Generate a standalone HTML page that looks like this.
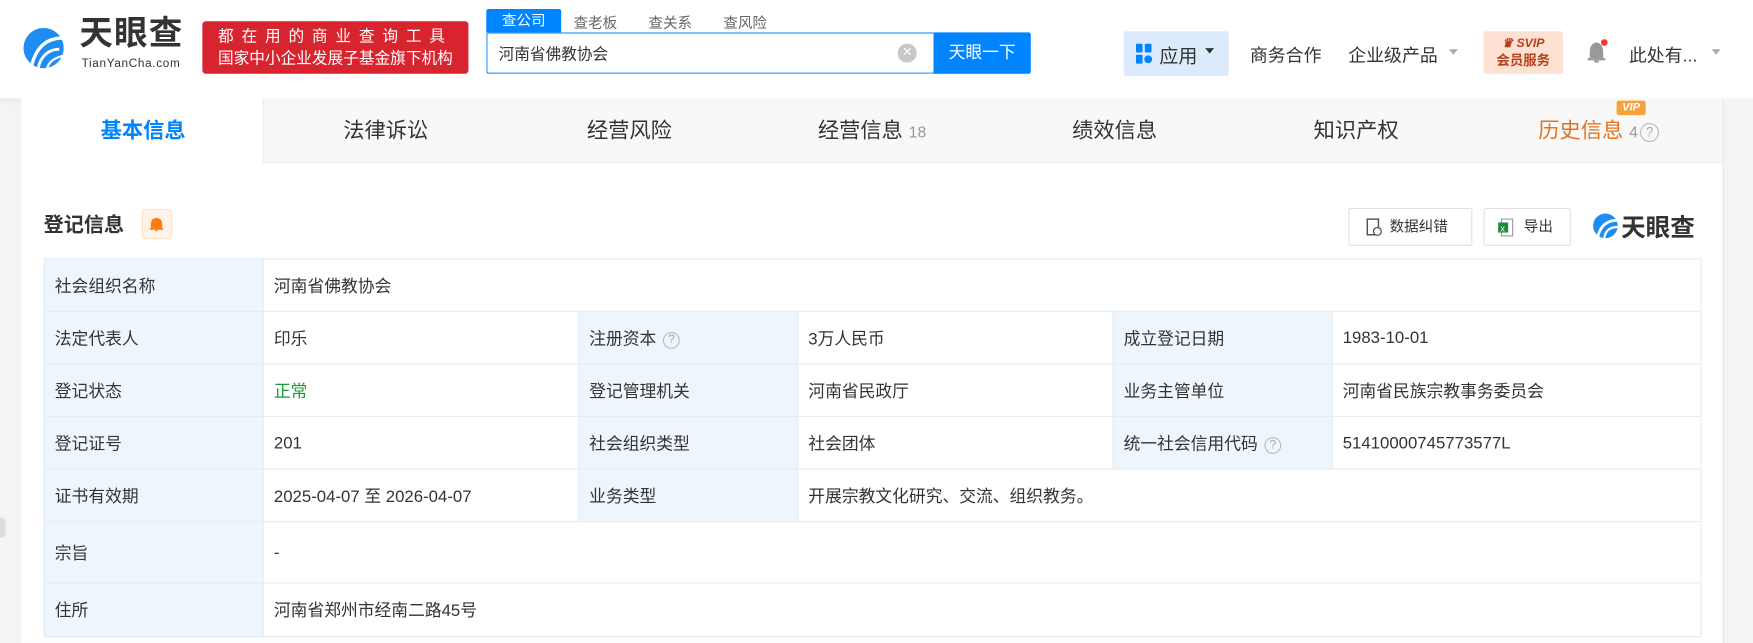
<!DOCTYPE html>
<html><head><meta charset="utf-8"><style>
*{margin:0;padding:0;box-sizing:border-box}
html,body{width:1753px;height:643px;overflow:hidden;background:#f5f5f5}
body{font-family:"Liberation Sans","Noto Sans CJK SC",sans-serif;color:#333}
#w{position:absolute;left:0;top:0;width:1568px;height:575px;transform:scale(1.11798);transform-origin:0 0;background:#f4f4f4}
.a{position:absolute;white-space:nowrap}
table{border-collapse:collapse;position:absolute;left:39px;top:231px;width:1483px}
td{border:1px solid #e4ecf4;font-size:15px;color:#333;padding:0 9px;height:47px}
td.l{background:#eef6fd;width:196px}
td.v{width:282px}
.q{display:inline-block;width:15px;height:15px;border:1px solid #bbb;border-radius:50%;font-size:11px;line-height:13px;text-align:center;color:#aaa;margin-left:6px;vertical-align:1px}
.tab{position:absolute;top:102px;font-size:19px;color:#333;transform:translateX(-50%)}
</style></head><body><div id="w">
<div class="a" style="left:0;top:0;width:1568px;height:88px;background:#fff;box-shadow:0 2px 6px rgba(0,0,0,.08)"></div>
<svg class="a" style="left:20px;top:20px" width="38" height="46" viewBox="0 0 38 46"><circle cx="19" cy="23" r="18" fill="#1e8cf0"/><path d="M8 40 C12 22 22 14 36 14" stroke="#fff" stroke-width="3" fill="none"/><path d="M14 42 C16 30 24 24 33 24" stroke="#fff" stroke-width="2.5" fill="none"/><path d="M22 42 C23 36 28 32 36 30" stroke="#fff" stroke-width="2" fill="none"/></svg>
<div class="a" style="left:71px;top:12px;font-size:30px;font-weight:bold;color:#333;letter-spacing:1px;line-height:38px">天眼查</div>
<div class="a" style="left:73px;top:51px;font-size:10.5px;color:#333;letter-spacing:.6px;line-height:12px">TianYanCha.com</div>
<div class="a" style="left:181px;top:19px;width:238px;height:47px;background:#d8242e;border-radius:3px;color:#fff;font-size:14px;text-align:center;line-height:20px;padding-top:3px"><div style="letter-spacing:7px">都在用的商业查询工具</div><div>国家中小企业发展子基金旗下机构</div></div>
<div class="a" style="left:435px;top:8px;width:67px;height:21px;background:#0084ff;color:#fff;font-size:13px;text-align:center;line-height:21px;border-radius:2px 2px 0 0">查公司</div>
<div class="a" style="left:513px;top:10px;font-size:13px;color:#666">查老板</div>
<div class="a" style="left:580px;top:10px;font-size:13px;color:#666">查关系</div>
<div class="a" style="left:647px;top:10px;font-size:13px;color:#666">查风险</div>
<div class="a" style="left:435px;top:29px;width:401px;height:37px;border:1px solid #0084ff;border-right:0;background:#fff;border-radius:2px 0 0 2px"></div>
<div class="a" style="left:446px;top:38px;font-size:14px;color:#333">河南省佛教协会</div>
<div class="a" style="left:803px;top:39px;width:17px;height:17px;border-radius:50%;background:#c8c8c8;color:#fff;font-size:11px;line-height:17px;text-align:center">✕</div>
<div class="a" style="left:835px;top:29px;width:87px;height:37px;background:#0084ff;color:#fff;font-size:15px;text-align:center;line-height:37px;border-radius:0 2px 2px 0">天眼一下</div>
<div class="a" style="left:1005px;top:28px;width:94px;height:40px;background:#dcebfc;border-radius:2px"></div>
<svg class="a" style="left:1016px;top:39px" width="16" height="18"><rect x="0" y="0" width="6" height="8" rx="1" fill="#0084ff"/><rect x="8" y="0" width="6" height="8" rx="1" fill="#0084ff"/><rect x="0" y="10" width="6" height="8" rx="1" fill="#0084ff"/><circle cx="11" cy="14" r="3.5" fill="#0084ff"/></svg>
<div class="a" style="left:1037px;top:36px;font-size:17px;color:#333">应用</div>
<div class="a" style="left:1078px;top:43px;width:0;height:0;border:4px solid transparent;border-top:5px solid #333"></div>
<div class="a" style="left:1118px;top:36px;font-size:16px;color:#333">商务合作</div>
<div class="a" style="left:1206px;top:36px;font-size:16px;color:#333">企业级产品</div>
<div class="a" style="left:1296px;top:44px;border:4px solid transparent;border-top:5px solid #aaa"></div>
<div class="a" style="left:1327px;top:28px;width:71px;height:38px;background:#fde2d4;border-radius:2px;text-align:center;color:#b8401c;font-weight:bold;font-size:11px;line-height:15px;padding-top:4px"><div style="font-style:italic">♛ SVIP</div><div style="font-size:12px">会员服务</div></div>
<svg class="a" style="left:1419px;top:35px" width="20" height="22"><path d="M3 17 L3 11 C3 6 6 3 9 3 C12 3 15 6 15 11 L15 17 Z" fill="#999"/><rect x="1" y="17" width="16" height="2" fill="#999"/><rect x="7" y="19" width="4" height="2" fill="#999"/><circle cx="16" cy="3" r="3" fill="#f33"/></svg>
<div class="a" style="left:1457px;top:36px;font-size:16px;color:#333">此处有...</div>
<div class="a" style="left:1531px;top:44px;border:4px solid transparent;border-top:5px solid #aaa"></div>
<div class="a" style="left:19px;top:88px;width:1522px;height:487px;background:#fff"></div>
<div class="a" style="left:19px;top:88px;width:1522px;height:58px;background:#f8f8f8;border-bottom:1px solid #ececec"></div>
<div class="a" style="left:19px;top:88px;width:217px;height:58px;background:#fff;border-right:1px solid #ececec"></div>
<div class="tab" style="left:128px;color:#0084ff;font-weight:bold">基本信息</div>
<div class="tab" style="left:345px">法律诉讼</div>
<div class="tab" style="left:563px">经营风险</div>
<div class="tab" style="left:780px">经营信息 <span style="font-size:14px;color:#999">18</span></div>
<div class="tab" style="left:997px">绩效信息</div>
<div class="tab" style="left:1213px">知识产权</div>
<div class="tab" style="left:1430px;color:#e5731e">历史信息 <span style="font-size:14px;color:#999">4</span><span class="q" style="width:17px;height:17px;line-height:15px;font-size:12px;margin-left:2px">?</span></div>
<div class="a" style="left:1446px;top:90px;width:26px;height:13px;background:#f7a23b;color:#fff;font-size:10px;font-weight:bold;font-style:italic;text-align:center;line-height:13px;border-radius:2px">VIP</div>
<div class="a" style="left:1541px;top:88px;width:27px;height:487px;background:#f4f4f4;border-left:1px solid #e8e8e8"></div>
<div class="a" style="left:39px;top:187px;font-size:18px;font-weight:bold;color:#333">登记信息</div>
<div class="a" style="left:127px;top:187px;width:27px;height:27px;background:#fff3e8;border:1px solid #fde2c8;border-radius:3px"></div>
<svg class="a" style="left:133px;top:193px" width="14" height="14"><path d="M2 11 L2 7 C2 4 4 2 7 2 C10 2 12 4 12 7 L12 11 Z" fill="#ff7a10"/><rect x="1" y="11" width="12" height="1.5" fill="#ff7a10"/><circle cx="7" cy="13" r="1" fill="#ff7a10"/></svg>
<div class="a" style="left:1206px;top:186px;width:111px;height:34px;border:1px solid #e0e0e0;border-radius:2px;font-size:13px;line-height:32px;padding-left:36px;color:#333">数据纠错</div>
<svg class="a" style="left:1222px;top:195px" width="14" height="17"><rect x="1" y="1" width="10" height="14" fill="none" stroke="#555" stroke-width="1.3"/><circle cx="10" cy="12" r="3.5" fill="#fff" stroke="#555" stroke-width="1.2"/></svg>
<div class="a" style="left:1327px;top:186px;width:78px;height:34px;border:1px solid #e0e0e0;border-radius:2px;font-size:13px;line-height:32px;padding-left:35px;color:#333">导出</div>
<svg class="a" style="left:1340px;top:195px" width="14" height="17"><rect x="3" y="1" width="10" height="15" fill="#fff" stroke="#999"/><rect x="0" y="4" width="9" height="9" fill="#1d8c3e"/><text x="2" y="12" font-size="8" fill="#fff" font-family="Liberation Sans">x</text></svg>
<svg class="a" style="left:1424px;top:189px" width="24" height="26"><circle cx="12" cy="13" r="11" fill="#1e8cf0"/><path d="M5 23 C8 12 14 8 23 8" stroke="#fff" stroke-width="2.5" fill="none"/><path d="M11 24 C12 17 16 14 23 14" stroke="#fff" stroke-width="2" fill="none"/></svg>
<div class="a" style="left:1450px;top:186px;font-size:22px;font-weight:bold;color:#333">天眼查</div>
<table>
<tr><td class="l">社会组织名称</td><td colspan="5">河南省佛教协会</td></tr>
<tr><td class="l">法定代表人</td><td class="v">印乐</td><td class="l">注册资本<span class="q">?</span></td><td class="v">3万人民币</td><td class="l">成立登记日期</td><td>1983-10-01</td></tr>
<tr><td class="l">登记状态</td><td class="v" style="color:#1a9c3a">正常</td><td class="l">登记管理机关</td><td class="v">河南省民政厅</td><td class="l">业务主管单位</td><td>河南省民族宗教事务委员会</td></tr>
<tr><td class="l">登记证号</td><td class="v">201</td><td class="l">社会组织类型</td><td class="v">社会团体</td><td class="l">统一社会信用代码<span class="q">?</span></td><td>51410000745773577L</td></tr>
<tr><td class="l">证书有效期</td><td class="v">2025-04-07 至 2026-04-07</td><td class="l">业务类型</td><td colspan="3">开展宗教文化研究、交流、组织教务。</td></tr>
<tr><td class="l" style="height:55px">宗旨</td><td colspan="5">-</td></tr>
<tr><td class="l" style="height:48px">住所</td><td colspan="5">河南省郑州市经南二路45号</td></tr>
</table>
<div class="a" style="left:0;top:463px;width:5px;height:18px;background:#ddd;border-radius:0 4px 4px 0"></div>
</div></body></html>
